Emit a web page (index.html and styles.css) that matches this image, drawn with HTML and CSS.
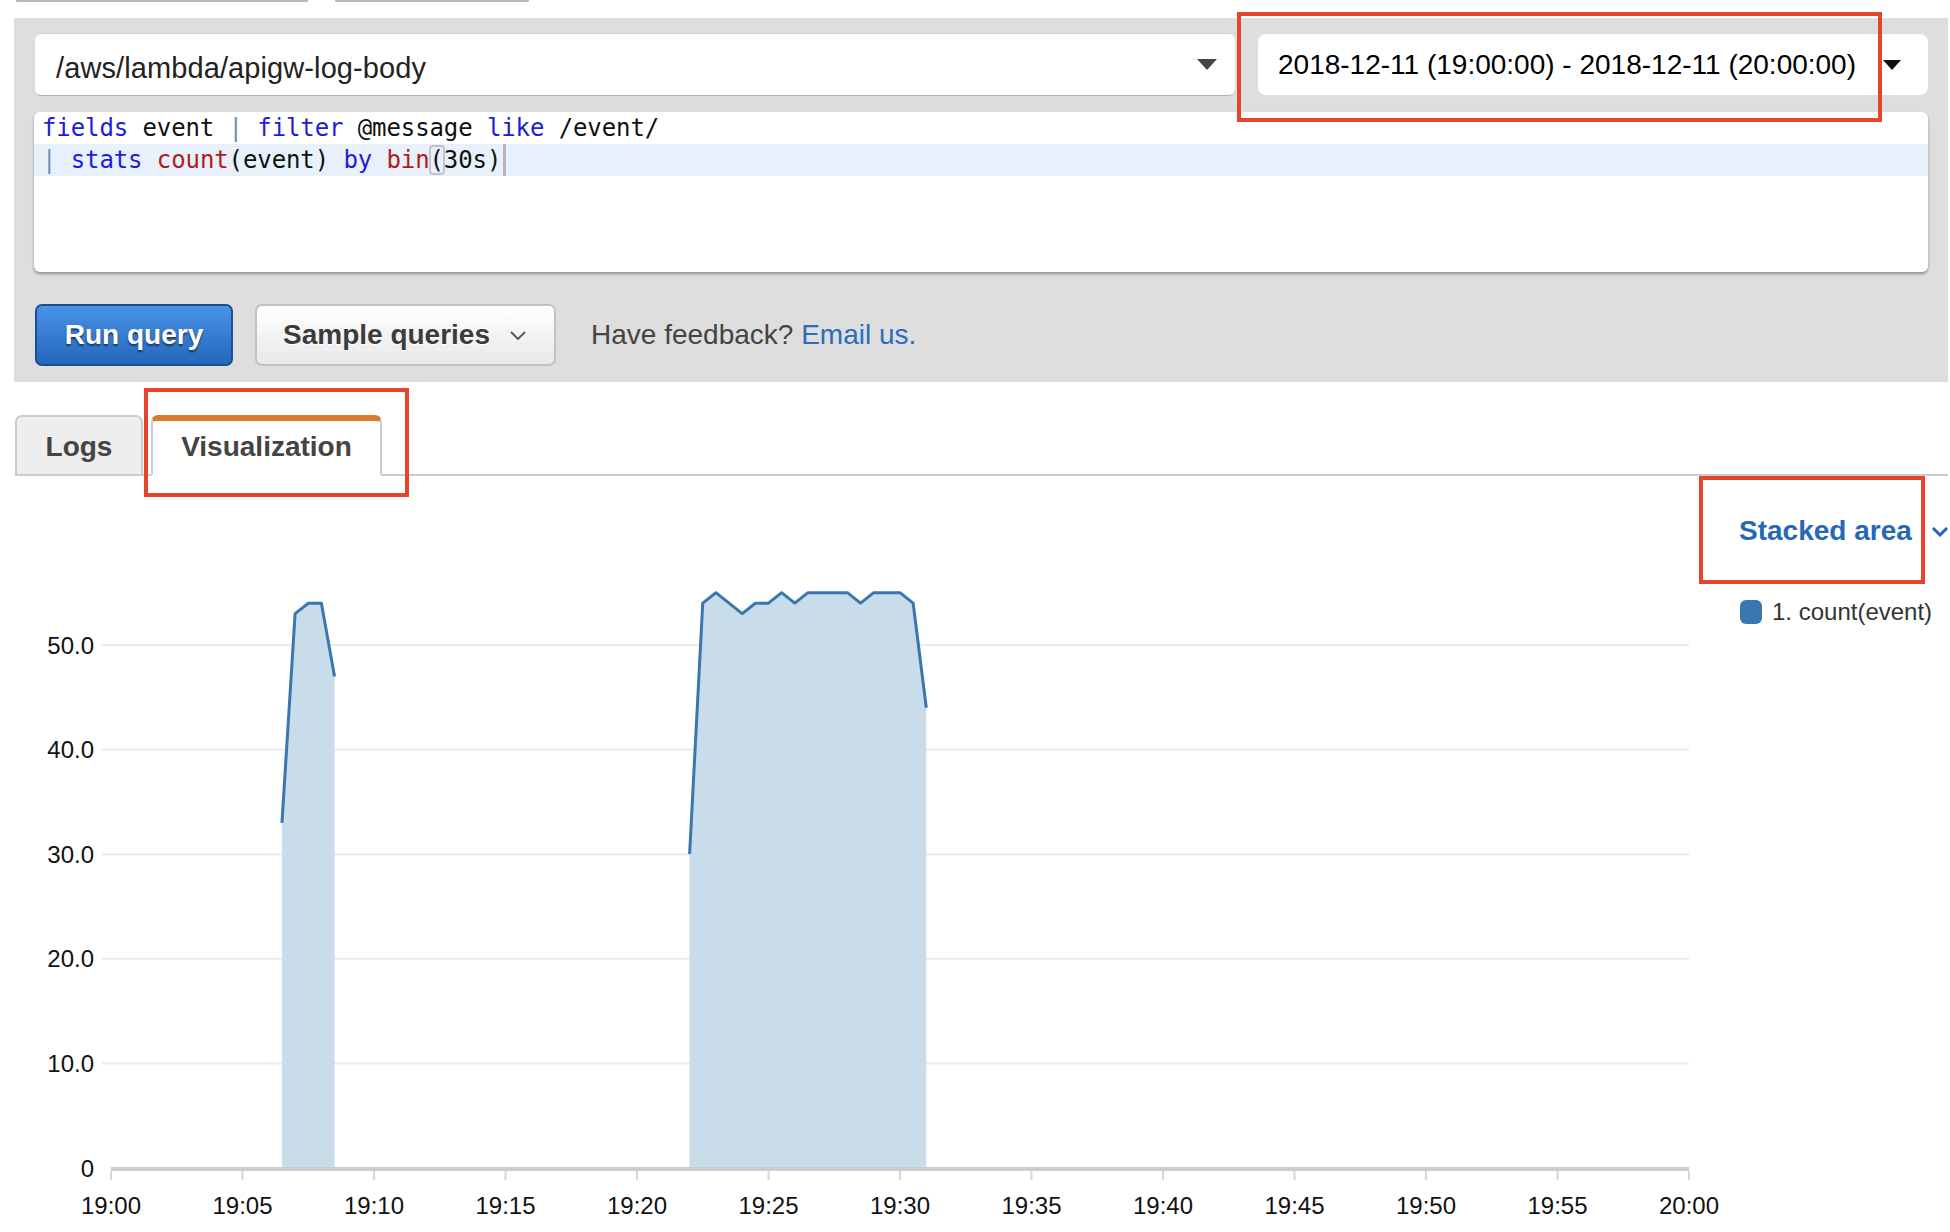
FILE: index.html
```
<!DOCTYPE html>
<html lang="en">
<head>
<meta charset="utf-8">
<title>CloudWatch Logs Insights</title>
<link rel="stylesheet" href="styles.css">
</head>
<body>
<div class="top-stubs"><span class="stub stub-a"></span><span class="stub stub-b"></span></div>

<section class="query-panel">
  <div class="selectors">
    <div class="log-select">
      <span class="log-name">/aws/lambda/apigw-log-body</span>
      <svg class="caret" width="20" height="11" viewBox="0 0 20 11"><path d="M0 0 H20 L10 11 Z" fill="#444"/></svg>
    </div>
    <div class="time-range">
      <span>2018-12-11 (19:00:00) - 2018-12-11 (20:00:00)</span>
      <svg class="caret" width="18" height="10" viewBox="0 0 18 10"><path d="M0 0 H18 L9 10 Z" fill="#111"/></svg>
    </div>
  </div>
  <div class="editor">
    <div class="code-line"><span class="kw">fields</span> event <span class="pipe">|</span> <span class="kw">filter</span> @message <span class="kw">like</span> /event/</div>
    <div class="code-line active"><span class="pipe">|</span> <span class="kw">stats</span> <span class="fn">count</span>(event) <span class="kw">by</span> <span class="fn">bin</span><span class="match">(</span>30s)<span class="cursor"></span></div>
  </div>
  <div class="actions">
    <button class="btn btn-primary">Run query</button>
    <button class="btn btn-secondary">Sample queries
      <svg class="chev" width="16" height="10" viewBox="0 0 16 10"><path d="M1 1 L8 8 L15 1" fill="none" stroke="#555" stroke-width="1.8"/></svg>
    </button>
    <p class="feedback">Have feedback? <a class="link">Email us.</a></p>
  </div>
</section>

<nav class="tabs">
  <div class="tab">Logs</div>
  <div class="tab tab-active">Visualization</div>
</nav>

<section class="viz">
  <svg class="chart" width="1730" height="756" viewBox="0 0 1730 756">
    <g stroke="#ebebeb" stroke-width="2">
      <line x1="102" y1="169" x2="1689" y2="169"/>
      <line x1="102" y1="273.6" x2="1689" y2="273.6"/>
      <line x1="102" y1="378.2" x2="1689" y2="378.2"/>
      <line x1="102" y1="482.8" x2="1689" y2="482.8"/>
      <line x1="102" y1="587.4" x2="1689" y2="587.4"/>
    </g>
    <g class="axis-label" text-anchor="end">
      <text x="94" y="177.5">50.0</text>
      <text x="94" y="282">40.0</text>
      <text x="94" y="386.7">30.0</text>
      <text x="94" y="491.3">20.0</text>
      <text x="94" y="595.9">10.0</text>
      <text x="94" y="700.5">0</text>
    </g>
    <path d="M281.95 692 L281.95 346.8 L295.1 137.6 L308.25 127.2 L321.4 127.2 L334.55 200.4 L334.55 692 Z" fill="#c9dcea"/>
    <path d="M689.6 692 L689.6 378.2 L702.75 127.2 L715.9 116.7 L729.05 127.2 L742.2 137.6 L755.35 127.2 L768.5 127.2 L781.65 116.7 L794.8 127.2 L807.95 116.7 L821.1 116.7 L834.25 116.7 L847.4 116.7 L860.55 127.2 L873.7 116.7 L886.85 116.7 L900 116.7 L913.15 127.2 L926.3 231.8 L926.3 692 Z" fill="#c9dcea"/>
    <g fill="none" stroke="#3a77b0" stroke-width="3" stroke-linejoin="round">
      <path d="M281.95 346.8 L295.1 137.6 L308.25 127.2 L321.4 127.2 L334.55 200.4"/>
      <path d="M689.6 378.2 L702.75 127.2 L715.9 116.7 L729.05 127.2 L742.2 137.6 L755.35 127.2 L768.5 127.2 L781.65 116.7 L794.8 127.2 L807.95 116.7 L821.1 116.7 L834.25 116.7 L847.4 116.7 L860.55 127.2 L873.7 116.7 L886.85 116.7 L900 116.7 L913.15 127.2 L926.3 231.8"/>
    </g>
    <line x1="111" y1="693" x2="1689" y2="693" stroke="#cccccc" stroke-width="4"/>
    <g stroke="#d6d6d6" stroke-width="2">
      <line x1="111" y1="695" x2="111" y2="704"/>
      <line x1="242.5" y1="695" x2="242.5" y2="704"/>
      <line x1="374" y1="695" x2="374" y2="704"/>
      <line x1="505.5" y1="695" x2="505.5" y2="704"/>
      <line x1="637" y1="695" x2="637" y2="704"/>
      <line x1="768.5" y1="695" x2="768.5" y2="704"/>
      <line x1="900" y1="695" x2="900" y2="704"/>
      <line x1="1031.5" y1="695" x2="1031.5" y2="704"/>
      <line x1="1163" y1="695" x2="1163" y2="704"/>
      <line x1="1294.5" y1="695" x2="1294.5" y2="704"/>
      <line x1="1426" y1="695" x2="1426" y2="704"/>
      <line x1="1557.5" y1="695" x2="1557.5" y2="704"/>
      <line x1="1689" y1="695" x2="1689" y2="704"/>
    </g>
    <g class="axis-label" text-anchor="middle">
      <text x="111" y="737.5">19:00</text>
      <text x="242.5" y="737.5">19:05</text>
      <text x="374" y="737.5">19:10</text>
      <text x="505.5" y="737.5">19:15</text>
      <text x="637" y="737.5">19:20</text>
      <text x="768.5" y="737.5">19:25</text>
      <text x="900" y="737.5">19:30</text>
      <text x="1031.5" y="737.5">19:35</text>
      <text x="1163" y="737.5">19:40</text>
      <text x="1294.5" y="737.5">19:45</text>
      <text x="1426" y="737.5">19:50</text>
      <text x="1557.5" y="737.5">19:55</text>
      <text x="1689" y="737.5">20:00</text>
    </g>
  </svg>
  <aside class="viz-side">
    <div class="chart-type">
      <span>Stacked area</span>
      <svg class="type-chev" width="18" height="11" viewBox="0 0 18 11"><path d="M2 2 L9 9 L16 2" fill="none" stroke="#2667b8" stroke-width="3"/></svg>
    </div>
    <div class="legend">
      <span class="swatch"></span>
      <span>1. count(event)</span>
    </div>
  </aside>
</section>

<div class="callout callout-time"></div>
<div class="callout callout-tab"></div>
<div class="callout callout-type"></div>
</body>
</html>
```

FILE: styles.css
```
* { box-sizing: border-box; }

html, body {
  margin: 0;
  padding: 0;
}

body {
  position: relative;
  width: 1950px;
  height: 1232px;
  overflow: hidden;
  background: #ffffff;
  font-family: "Liberation Sans", Arial, Helvetica, sans-serif;
  color: #222;
}

.top-stubs {
  display: flex;
  gap: 27px;
  height: 2px;
  padding-left: 16px;
}

.stub {
  display: block;
  height: 2px;
  border: 2px solid #b8b8b8;
  border-top: 0;
  border-radius: 0 0 6px 6px;
}
.stub-a { width: 292px; }
.stub-b { width: 194px; }

.query-panel {
  margin: 16px 2px 0 14px;
  height: 364px;
  padding: 16px 20px 16px 21px;
  background: #dedede;
}

.selectors {
  display: flex;
  gap: 23px;
  height: 61px;
}

.log-select {
  flex: 1;
  display: flex;
  align-items: center;
  justify-content: space-between;
  padding: 0 18px 0 21px;
  background: #fff;
  border-radius: 6px;
  box-shadow: 0 2px 1px -1px rgba(0, 0, 0, 0.22), 0 -1px 0 rgba(0, 0, 0, 0.05);
  font-size: 29px;
  color: #222;
}

.log-name {
  padding-top: 7px;
  letter-spacing: 0.1px;
}

.time-range {
  width: 670px;
  display: flex;
  align-items: center;
  gap: 27px;
  padding: 0 0 0 20px;
  background: #fff;
  border-radius: 8px;
  font-size: 28px;
  color: #000;
}

.editor {
  margin: 17px 0 0 -1px;
  height: 160px;
  background: #fff;
  border-radius: 6px;
  box-shadow: 0 2px 3px rgba(0, 0, 0, 0.35);
  font-family: "DejaVu Sans Mono", "Liberation Mono", monospace;
  font-size: 24px;
  line-height: 32px;
  color: #111;
  overflow: hidden;
}

.code-line {
  padding-left: 8px;
  height: 32px;
  white-space: pre;
  letter-spacing: -0.1px;
}

.code-line.active {
  background: #e8f0fb;
}

.kw { color: #1d1dd8; }
.fn { color: #b01c1c; }
.pipe { color: #6d8fb5; }

.match {
  outline: 2px solid #c4c4c4;
  outline-offset: -1px;
  border-radius: 3px;
}

.cursor {
  display: inline-block;
  width: 3px;
  height: 32px;
  margin-left: 2px;
  vertical-align: top;
  background: #b5b5b5;
}

.actions {
  display: flex;
  align-items: center;
  margin-top: 32px;
  height: 62px;
}

.btn {
  height: 62px;
  font-family: "Liberation Sans", Arial, sans-serif;
  font-size: 28px;
  font-weight: bold;
  border-radius: 7px;
  padding: 0;
  cursor: pointer;
}

.btn-primary {
  width: 198px;
  color: #fff;
  background: linear-gradient(#4a93e6, #2467bd);
  border: 2px solid #1c4f8f;
  text-shadow: 0 2px 2px rgba(0, 0, 0, 0.55);
}

.btn-secondary {
  width: 301px;
  margin-left: 22px;
  display: flex;
  align-items: center;
  gap: 20px;
  padding-left: 26px;
  color: #3b3b3b;
  background: linear-gradient(#ffffff, #e8e8e8);
  border: 2px solid #c2c2c2;
  text-shadow: 0 1px 0 #fff;
}

.chev { margin-top: 2px; }

.feedback {
  margin: 0 0 0 35px;
  font-size: 28px;
  color: #444;
}

.link {
  color: #2a6ebb;
}

.tabs {
  display: flex;
  gap: 8px;
  margin: 33px 2px 0 15px;
  border-bottom: 2px solid #cccccc;
}

.tab {
  height: 61px;
  margin-bottom: -2px;
  display: flex;
  align-items: center;
  justify-content: center;
  font-size: 28px;
  font-weight: bold;
  color: #444;
  border: 2px solid #cccccc;
  border-radius: 7px 7px 0 0;
  background: #eeeeee;
}

.tab:first-child {
  width: 128px;
  padding-top: 2px;
}

.tab-active {
  width: 231px;
  background: #ffffff;
  border-top: 6px solid #d97a2b;
  border-bottom: 2px solid #ffffff;
  padding-bottom: 2px;
}

.viz {
  display: flex;
  height: 756px;
}

.chart {
  display: block;
  flex: none;
}

.axis-label text {
  font-family: "Liberation Sans", Arial, sans-serif;
  font-size: 24px;
  fill: #111;
}

.viz-side {
  flex: 1;
  padding-top: 39px;
  padding-left: 9px;
}

.chart-type {
  display: flex;
  align-items: center;
  gap: 19px;
  height: 32px;
  white-space: nowrap;
  font-size: 28px;
  font-weight: bold;
  color: #2667b8;
}

.type-chev { flex: none; }

.legend {
  display: flex;
  align-items: center;
  gap: 10px;
  margin-top: 53px;
  margin-left: 1px;
  height: 24px;
  white-space: nowrap;
  font-size: 24px;
  color: #333;
}

.swatch {
  display: block;
  width: 22px;
  height: 24px;
  border-radius: 6px;
  background: #3a77b0;
}

.callout {
  position: absolute;
  border: 4px solid #e8432c;
  pointer-events: none;
}

.callout-time {
  left: 1237px;
  top: 12px;
  width: 645px;
  height: 110px;
}

.callout-tab {
  left: 144px;
  top: 388px;
  width: 265px;
  height: 109px;
}

.callout-type {
  left: 1699px;
  top: 476px;
  width: 226px;
  height: 108px;
}
```
